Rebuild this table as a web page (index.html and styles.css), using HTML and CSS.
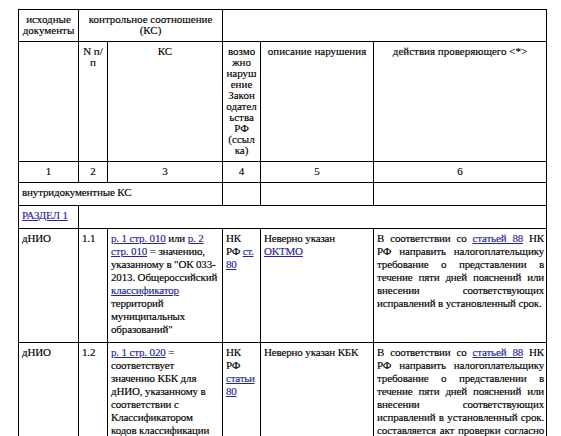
FILE: index.html
```html
<!DOCTYPE html>
<html lang="ru">
<head>
<meta charset="utf-8">
<link rel="stylesheet" href="styles.css">
</head>
<body>
<table class="grid">
  <colgroup>
    <col class="c1"><col class="c2"><col class="c3"><col class="c4"><col class="c5"><col class="c6">
  </colgroup>
  <tr class="head">
    <td class="mid">исходные документы</td>
    <td class="mid" colspan="2">контрольное соотношение (КС)</td>
    <td colspan="3"></td>
  </tr>
  <tr class="head">
    <td></td>
    <td class="center">N п/п</td>
    <td class="center">КС</td>
    <td class="center">возможно нарушение Законодательства РФ (ссылка)</td>
    <td class="center">описание нарушения</td>
    <td class="center">действия проверяющего &lt;*&gt;</td>
  </tr>
  <tr class="nums">
    <td>1</td><td>2</td><td>3</td><td>4</td><td>5</td><td>6</td>
  </tr>
  <tr class="body">
    <td colspan="3">внутридокументные КС</td>
    <td></td><td></td><td></td>
  </tr>
  <tr class="body">
    <td><a href="#">РАЗДЕЛ 1</a></td>
    <td colspan="5"></td>
  </tr>
  <tr class="body">
    <td>дНИО</td>
    <td>1.1</td>
    <td><a href="#">р. 1 стр. 010</a> или <a href="#">р. 2 стр. 010</a> = значению, указанному в "ОК 033-2013. Общероссийский <a href="#">классификатор</a> территорий муниципальных образований"</td>
    <td class="law">НК РФ <a href="#">ст. 80</a></td>
    <td>Неверно указан <a href="#">ОКТМО</a></td>
    <td class="just">В соответствии со <a href="#">статьей 88</a> НК РФ направить налогоплательщику требование о представлении в течение пяти дней пояснений или внесении соответствующих исправлений в установленный срок.</td>
  </tr>
  <tr class="body">
    <td>дНИО</td>
    <td>1.2</td>
    <td><a href="#">р. 1 стр. 020</a> = соответствует значению КБК для дНИО, указанному в соответствии с Классификатором кодов классификации доходов бюджетов Российской Федерации</td>
    <td class="law">НК РФ <a href="#">статьи 80</a></td>
    <td>Неверно указан КБК</td>
    <td class="just">В соответствии со <a href="#">статьей 88</a> НК РФ направить налогоплательщику требование о представлении в течение пяти дней пояснений или внесении соответствующих исправлений в установленный срок. составляется акт проверки согласно статье 100 НК РФ</td>
  </tr>
</table>
</body>
</html>
```

FILE: styles.css
```css
html, body {
  margin: 0;
  padding: 0;
  background: #ffffff;
}
body {
  padding: 9px 0 0 18px;
  font-family: "Liberation Serif", "Times New Roman", serif;
  font-size: 11px;
  color: #000000;
}
.grid {
  border-collapse: collapse;
  table-layout: fixed;
  width: 529px;
  font-size: 11px;
  -webkit-text-stroke: 0.15px #000000;
}
.c1 { width: 60px; }
.c2 { width: 29px; }
.c3 { width: 115px; }
.c4 { width: 38px; }
.c5 { width: 113px; }
.c6 { width: 173px; }
.grid td {
  border: 1px solid #000000;
  vertical-align: top;
  overflow-wrap: break-word;
  word-wrap: break-word;
}
.head td {
  line-height: 11px;
  padding: 4px 3px 5px 3px;
}
.head .mid {
  text-align: center;
  vertical-align: middle;
}
.center {
  text-align: center;
}
.nums td {
  text-align: center;
  line-height: 13px;
  padding: 3px 3px 4px 3px;
}
.body td {
  line-height: 13px;
  padding: 3px 2px 6px 3px;
  text-align: left;
  letter-spacing: -0.15px;
}
.body td.law {
  padding-right: 3px;
  letter-spacing: -0.25px;
}
.body td.just {
  text-align: justify;
}
a {
  color: #26269c;
  text-decoration: underline;
  -webkit-text-stroke: 0.15px #26269c;
}
```
